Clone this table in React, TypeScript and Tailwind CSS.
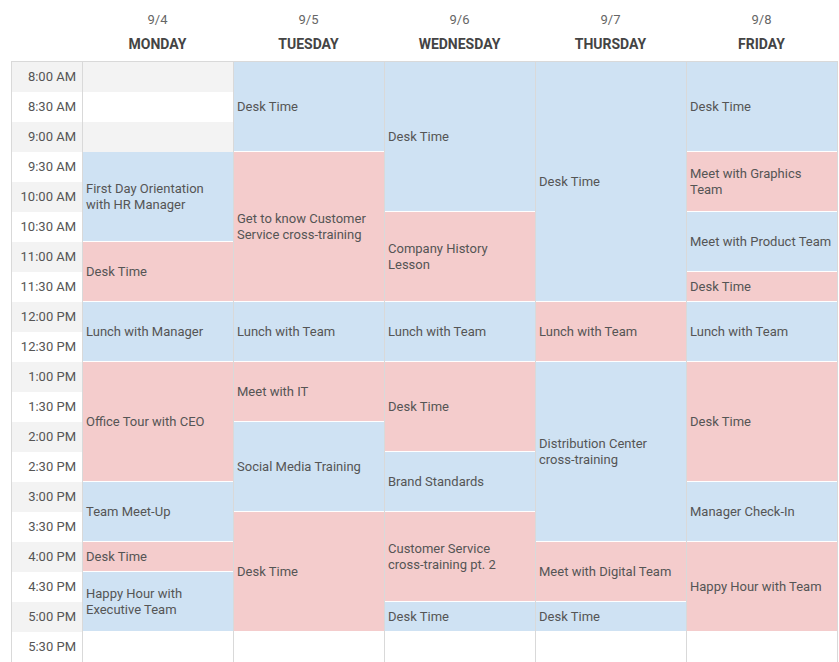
import React from 'react';

type Block = { span: number; title?: string; color?: 'blue' | 'pink' };

const times = [
  '8:00 AM', '8:30 AM', '9:00 AM', '9:30 AM', '10:00 AM', '10:30 AM', '11:00 AM', '11:30 AM',
  '12:00 PM', '12:30 PM', '1:00 PM', '1:30 PM', '2:00 PM', '2:30 PM', '3:00 PM', '3:30 PM',
  '4:00 PM', '4:30 PM', '5:00 PM', '5:30 PM',
];

const days: { date: string; name: string; blocks: Block[] }[] = [
  {
    date: '9/4',
    name: 'MONDAY',
    blocks: [
      { span: 3 },
      { span: 3, title: 'First Day Orientation with HR Manager', color: 'blue' },
      { span: 2, title: 'Desk Time', color: 'pink' },
      { span: 2, title: 'Lunch with Manager', color: 'blue' },
      { span: 4, title: 'Office Tour with CEO', color: 'pink' },
      { span: 2, title: 'Team Meet-Up', color: 'blue' },
      { span: 1, title: 'Desk Time', color: 'pink' },
      { span: 2, title: 'Happy Hour with Executive Team', color: 'blue' },
      { span: 1 },
    ],
  },
  {
    date: '9/5',
    name: 'TUESDAY',
    blocks: [
      { span: 3, title: 'Desk Time', color: 'blue' },
      { span: 5, title: 'Get to know Customer Service cross-training', color: 'pink' },
      { span: 2, title: 'Lunch with Team', color: 'blue' },
      { span: 2, title: 'Meet with IT', color: 'pink' },
      { span: 3, title: 'Social Media Training', color: 'blue' },
      { span: 4, title: 'Desk Time', color: 'pink' },
      { span: 1 },
    ],
  },
  {
    date: '9/6',
    name: 'WEDNESDAY',
    blocks: [
      { span: 5, title: 'Desk Time', color: 'blue' },
      { span: 3, title: 'Company History Lesson', color: 'pink' },
      { span: 2, title: 'Lunch with Team', color: 'blue' },
      { span: 3, title: 'Desk Time', color: 'pink' },
      { span: 2, title: 'Brand Standards', color: 'blue' },
      { span: 3, title: 'Customer Service cross-training pt. 2', color: 'pink' },
      { span: 1, title: 'Desk Time', color: 'blue' },
      { span: 1 },
    ],
  },
  {
    date: '9/7',
    name: 'THURSDAY',
    blocks: [
      { span: 8, title: 'Desk Time', color: 'blue' },
      { span: 2, title: 'Lunch with Team', color: 'pink' },
      { span: 6, title: 'Distribution Center cross-training', color: 'blue' },
      { span: 2, title: 'Meet with Digital Team', color: 'pink' },
      { span: 1, title: 'Desk Time', color: 'blue' },
      { span: 1 },
    ],
  },
  {
    date: '9/8',
    name: 'FRIDAY',
    blocks: [
      { span: 3, title: 'Desk Time', color: 'blue' },
      { span: 2, title: 'Meet with Graphics Team', color: 'pink' },
      { span: 2, title: 'Meet with Product Team', color: 'blue' },
      { span: 1, title: 'Desk Time', color: 'pink' },
      { span: 2, title: 'Lunch with Team', color: 'blue' },
      { span: 4, title: 'Desk Time', color: 'pink' },
      { span: 2, title: 'Manager Check-In', color: 'blue' },
      { span: 3, title: 'Happy Hour with Team', color: 'pink' },
      { span: 1 },
    ],
  },
];

function stripe(row: number) {
  return row % 2 === 0 ? 'bg-[#f3f3f3]' : 'bg-white';
}

// keep hyphenated words together, like the sheet does
function Title({ text }: { text: string }) {
  const words = text.split(' ');
  return (
    <span>
      {words.map((w, i) => (
        <React.Fragment key={i}>
          {i > 0 && ' '}
          {w.includes('-') ? <span className="whitespace-nowrap">{w}</span> : w}
        </React.Fragment>
      ))}
    </span>
  );
}

function DayColumn({ blocks }: { blocks: Block[] }) {
  let row = 0;
  return (
    <div className="flex w-[151px] flex-col border-l border-[#d9d9d9]">
      {blocks.map((b, i) => {
        const start = row;
        row += b.span;
        if (!b.title) {
          return Array.from({ length: b.span }, (_, k) => (
            <div key={`${i}-${k}`} className={`h-[30px] ${stripe(start + k)}`} />
          ));
        }
        return (
          <div
            key={i}
            style={{ height: b.span * 30 }}
            className={`flex items-center border-b border-white pl-[3px] pr-1 leading-4 ${
              b.color === 'blue' ? 'bg-[#cfe2f3]' : 'bg-[#f4cccc]'
            }`}
          >
            <Title text={b.title} />
          </div>
        );
      })}
    </div>
  );
}

export default function App() {
  return (
    <div className="h-[662px] w-[839px] overflow-hidden bg-white font-['Roboto',sans-serif] text-[13px] text-[#555]">
      <div className="flex h-[61px] pl-[82px]">
        {days.map((d) => (
          <div key={d.name} className="flex w-[151px] flex-col items-center pt-[12px]">
            <span className="leading-4 text-[#666]">{d.date}</span>
            <span className="mt-[7px] text-[14px] font-bold leading-[18px] text-[#444]">{d.name}</span>
          </div>
        ))}
      </div>
      <div className="ml-[11px] flex w-[827px] border border-[#d9d9d9]">
        <div className="flex w-[70px] flex-col">
          {times.map((t, i) => (
            <div key={t} className={`flex h-[30px] items-center justify-end pr-[6px] ${stripe(i)}`}>
              {t}
            </div>
          ))}
        </div>
        {days.map((d) => (
          <DayColumn key={d.name} blocks={d.blocks} />
        ))}
      </div>
    </div>
  );
}
